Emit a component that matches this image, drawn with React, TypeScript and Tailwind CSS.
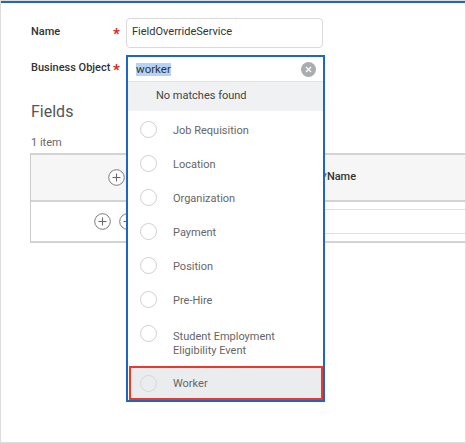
import { FC } from "react";

const options: string[][] = [
  ["Job Requisition"],
  ["Location"],
  ["Organization"],
  ["Payment"],
  ["Position"],
  ["Pre-Hire"],
  ["Student Employment", "Eligibility Event"],
];

const Radio: FC<{ faded?: boolean }> = ({ faded }) => (
  <span
    className={`block h-[17px] w-[17px] shrink-0 rounded-full border ${
      faded ? "border-[#d6d7d8]" : "border-[#cfd0d2] bg-white"
    }`}
  />
);

const CircleIcon: FC<{ minus?: boolean }> = ({ minus }) => (
  <svg width="17" height="17" viewBox="0 0 17 17" className="shrink-0">
    <circle cx="8.5" cy="8.5" r="7.8" fill="white" stroke="#7a7a7a" strokeWidth="1" />
    <line x1="4.5" y1="8.5" x2="12.5" y2="8.5" stroke="#6a6a6a" strokeWidth="1.1" />
    {!minus && <line x1="8.5" y1="4.5" x2="8.5" y2="12.5" stroke="#6a6a6a" strokeWidth="1.1" />}
  </svg>
);

const Dropdown: FC = () => (
  <div className="absolute left-0 top-0 z-10 w-[199px] border-2 border-[#1d66c6] bg-white">
    {/* search input */}
    <div className="flex h-[25px] items-center justify-between border-b border-[#e2e3e4] pl-[8px] pr-[7px]">
      <span className="bg-[#b5d3f6] text-[11.5px] leading-[13px] text-[#333]">worker</span>
      <span className="flex h-[15px] w-[15px] items-center justify-center rounded-full bg-[#a9adb2]">
        <svg width="7" height="7" viewBox="0 0 7 7">
          <path d="M1 1L6 6M6 1L1 6" stroke="white" strokeWidth="1.2" />
        </svg>
      </span>
    </div>
    <div className="flex h-[29px] items-center bg-[#f0f1f2] pl-[28px] text-[11px] text-[#444]">
      No matches found
    </div>
    {/* options */}
    <ul className="pt-[3px]">
      {options.map((lines) => (
        <li
          key={lines[0]}
          className={`flex items-start pl-[12px] pt-[7px] ${lines.length > 1 ? "h-[48px]" : "h-[34px]"}`}
        >
          <Radio />
          <div className={`ml-[16px] text-[11px] leading-[14px] text-[#666] ${lines.length > 1 ? "mt-[5px]" : "mt-[3px]"}`}>
            {lines.map((l) => (
              <div key={l}>{l}</div>
            ))}
          </div>
        </li>
      ))}
      <li className="ml-[1px] flex h-[34px] items-start border-2 border-[#e8392b] bg-[#ebeced] pl-[9px] pt-[7px]">
        <Radio faded />
        <div className="ml-[16px] mt-[2px] text-[11px] leading-[14px] text-[#666]">Worker</div>
      </li>
    </ul>
  </div>
);

const App: FC = () => {
  return (
    <div
      className="relative h-[443px] w-[466px] overflow-hidden border border-[#dcdcdc] bg-white"
      style={{ fontFamily: "Roboto, 'Liberation Sans', sans-serif" }}
    >
      <div className="h-[2px] bg-[#2066c0]" />
      <div className="pl-[29px] pt-[14px]">
        {/* Name */}
        <div className="flex h-[30px] items-center pt-[1px]">
          <div className="w-[83px] pl-[1px] text-[11px] font-medium text-[#333]">Name</div>
          <div className="w-[13px] pt-[4px] text-[15px] font-bold leading-none text-[#e2231a]">*</div>
          <div className="flex h-[30px] w-[197px] items-center rounded-[4px] border border-[#d9d9d9] pl-[5px] text-[11px] text-[#333]">
            FieldOverrideService
          </div>
        </div>
        {/* Business Object */}
        <div className="mt-[8px] flex h-[27px] items-center">
          <div className="w-[83px] pl-[1px] text-[11px] font-medium text-[#333]">Business Object</div>
          <div className="w-[13px] pt-[4px] text-[15px] font-bold leading-none text-[#e2231a]">*</div>
          <div className="relative h-[27px] w-[197px]">
            <Dropdown />
          </div>
        </div>

        <div className="mt-[20px] pl-[1px] text-[16px] leading-[20px] text-[#555]">Fields</div>
        <div className="mt-[14px] pl-[1px] text-[11px] leading-[14px] text-[#666]">1 item</div>

        {/* table */}
        <div className="mt-[3px] w-[480px] border-l border-[#cbcbcb]">
          <div className="flex h-[49px] items-center border-y-2 border-[#d3d3d3] bg-[#f6f6f6]">
            <div className="w-[110px] pl-[77px]">
              <CircleIcon />
            </div>
            <div className="w-[181px]" />
            <div className="text-[11px] font-medium text-[#333]">*Name</div>
          </div>
          <div className="flex h-[41px] items-center border-b-2 border-[#d3d3d3]">
            <div className="flex w-[110px] gap-[8px] pl-[63px]">
              <CircleIcon />
              <CircleIcon minus />
            </div>
            <div className="w-[185px]" />
            <div className="h-[25px] w-[200px] rounded-[4px] border border-[#e0e0e0]" />
          </div>
        </div>
      </div>
    </div>
  );
};

export default App;
